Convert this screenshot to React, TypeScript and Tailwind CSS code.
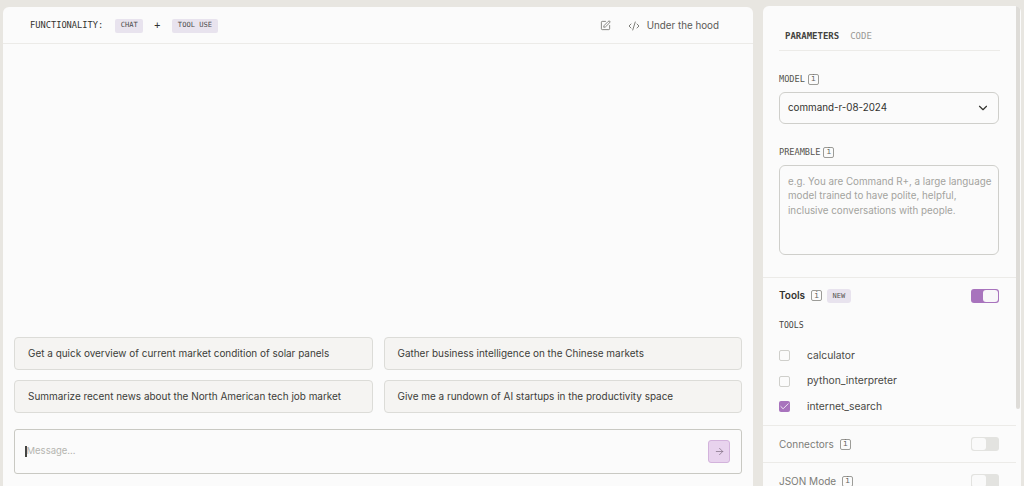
import { ArrowRight, Check, ChevronDown, CodeXml, SquarePen } from "lucide-react";

const sans = "font-['Inter',sans-serif]";
const mono = "font-['DejaVu_Sans_Mono',monospace]";

function Info() {
  return (
    <span className={`${mono} flex h-[11px] w-[11px] items-center justify-center rounded-[2px] border border-[#9c9c98] text-[8px] leading-none text-[#66665f]`}>
      i
    </span>
  );
}

function Toggle({ on }: { on?: boolean }) {
  return on ? (
    <div className="flex h-[14px] w-[28px] items-center justify-end rounded-[3px] bg-[#a873bd] pr-[1px]">
      <div className="h-[12px] w-[15px] rounded-[3px] bg-[#f8f6f9]" />
    </div>
  ) : (
    <div className="flex h-[14px] w-[28px] items-center rounded-[3px] bg-[#e3e3e0] pl-[1px]">
      <div className="h-[12px] w-[14px] rounded-[3px] bg-[#fafafa]" />
    </div>
  );
}

function Suggestion({ text }: { text: string }) {
  return (
    <div className="flex h-[33px] items-center rounded-[4px] border border-[#dcdcd8] bg-[#f5f4f2] pl-[13px] text-[9.95px] text-[#3c3c38]">
      {text}
    </div>
  );
}

function ToolRow({ name, checked }: { name: string; checked?: boolean }) {
  return (
    <div className="flex h-[25.3px] items-center gap-[17px]">
      {checked ? (
        <div className="flex h-[11px] w-[11px] items-center justify-center rounded-[2px] bg-[#a873bd]">
          <Check size={11} color="#ffffff" strokeWidth={1.75} />
        </div>
      ) : (
        <div className="h-[11px] w-[11px] rounded-[2px] border border-[#cfcfcb] bg-[#fbfbfb]" />
      )}
      <span className="text-[10.3px] text-[#4a4a46]">{name}</span>
    </div>
  );
}

export default function App() {
  return (
    <div className={`${sans} flex h-[486px] w-[1024px] items-start overflow-hidden bg-[#e8e6e1] pl-[3px] pt-[7px]`}>
      <main className="flex h-[479px] w-[750px] shrink-0 flex-col rounded-t-[6px] bg-[#fbfbfb]">
        <header className="flex h-[37px] shrink-0 items-center border-b border-[#ecebe8] pl-[27px] pr-[34px] pt-[1px]">
          <span className={`${mono} text-[8.7px] text-[#33332f]`}>FUNCTIONALITY:</span>
          <span className={`${mono} ml-[12px] flex h-[14px] items-center rounded-[2px] bg-[#e8e3ee] px-[5.5px] text-[7.1px] text-[#4d4d4d]`}>CHAT</span>
          <span className={`${mono} ml-[11px] text-[10px] text-[#33332f]`}>+</span>
          <span className={`${mono} ml-[12px] flex h-[14px] items-center rounded-[2px] bg-[#e8e3ee] px-[5.5px] text-[7.1px] text-[#4d4d4d]`}>TOOL USE</span>
          <SquarePen className="ml-auto" size={11} color="#55554f" strokeWidth={1.5} />
          <CodeXml className="ml-[17px]" size={12} color="#55554f" strokeWidth={1.5} />
          <span className="ml-[7px] pt-[1px] text-[9.8px] text-[#5a5a55]">Under the hood</span>
        </header>
        <div className="flex flex-1 flex-col justify-end px-[11px] pb-[12px]">
          <div className="grid grid-cols-2 gap-x-[11px] gap-y-[10px]">
            <Suggestion text="Get a quick overview of current market condition of solar panels" />
            <Suggestion text="Gather business intelligence on the Chinese markets" />
            <Suggestion text="Summarize recent news about the North American tech job market" />
            <Suggestion text="Give me a rundown of AI startups in the productivity space" />
          </div>
          <div className="mt-[16px] flex h-[45px] items-center justify-between rounded-[3px] border border-[#c9c9c3] bg-[#fbfbfb] pl-[10px] pr-[11px]">
            <div className="flex items-center">
              <div className="h-[11px] w-[1.5px] bg-[#44443f]" />
              <span className="text-[9.5px] text-[#b5b5b0]">Message...</span>
            </div>
            <div className="flex h-[23px] w-[22px] items-center justify-center rounded-[3px] border border-[#d3b3dc] bg-[#e8d3ee]">
              <ArrowRight size={11} color="#7a6a7e" strokeWidth={1.5} />
            </div>
          </div>
        </div>
      </main>

      <aside className="ml-[10px] -mt-[1px] flex h-[480px] w-[258px] shrink-0 overflow-hidden rounded-t-[6px] bg-[#fbfbfb]">
        <div className="w-[253px] shrink-0">
          <div className="px-[16px]">
            <div className={`${mono} flex h-[45px] items-end gap-[11px] border-b border-[#ecebe8] pb-[7px] pl-[6px] text-[9px]`}>
              <span className="font-bold text-[#44443f]">PARAMETERS</span>
              <span className="text-[#9a9a95]">CODE</span>
            </div>
            <div className={`${mono} mt-[22px] flex items-center gap-[3px] text-[8.6px] text-[#55554f]`}>
              MODEL <Info />
            </div>
            <div className="mt-[6px] flex h-[32px] w-[220px] items-center justify-between rounded-[6px] border border-[#cfcfcb] pl-[8px] pr-[8px] text-[9.8px] text-[#33332f]">
              command-r-08-2024
              <ChevronDown size={14} color="#33332f" strokeWidth={2} />
            </div>
            <div className={`${mono} mt-[22px] flex items-center gap-[3px] text-[8.6px] text-[#55554f]`}>
              PREAMBLE <Info />
            </div>
            <div className="mt-[6px] h-[90px] w-[220px] rounded-[6px] border border-[#cfcfcb] pl-[8px] pr-[2px] pt-[9px] text-[9.8px] leading-[14.5px] text-[#a3a39e]">
              e.g. You are Command R+, a large language model trained to have polite, helpful, inclusive conversations with people.
            </div>
          </div>
          <div className="mt-[22px] border-t border-[#ecebe8] px-[16px] pt-[11px]">
            <div className="flex h-[14px] w-[220px] items-center">
              <span className="text-[10px] font-semibold text-[#33332f]">Tools</span>
              <span className="ml-[6px]"><Info /></span>
              <span className={`${mono} ml-[5px] flex h-[14px] items-center rounded-[3px] bg-[#e8e3ee] px-[5.5px] text-[7px] text-[#55554f]`}>NEW</span>
              <span className="ml-auto"><Toggle on /></span>
            </div>
            <div className={`${mono} mt-[16px] text-[8.2px] text-[#44443f]`}>TOOLS</div>
            <div className="mt-[12px] pb-[6px]">
              <ToolRow name="calculator" />
              <ToolRow name="python_interpreter" />
              <ToolRow name="internet_search" checked />
            </div>
          </div>
          <div className="flex h-[37px] items-center border-t border-[#ecebe8] px-[16px] pt-[1px]">
            <div className="flex w-[220px] items-center">
              <span className="text-[10px] text-[#7d7d78]">Connectors</span>
              <span className="ml-[6px]"><Info /></span>
              <span className="ml-auto"><Toggle /></span>
            </div>
          </div>
          <div className="flex h-[37px] items-center border-t border-[#ecebe8] px-[16px] pt-[1px]">
            <div className="flex w-[220px] items-center">
              <span className="text-[10px] text-[#7d7d78]">JSON Mode</span>
              <span className="ml-[6px]"><Info /></span>
              <span className="ml-auto"><Toggle /></span>
            </div>
          </div>
        </div>
        <div className="w-[5px] shrink-0">
          <div className="h-[403px] w-[4px] rounded-b-[2px] bg-[#dedcd8]" />
        </div>
      </aside>
    </div>
  );
}
